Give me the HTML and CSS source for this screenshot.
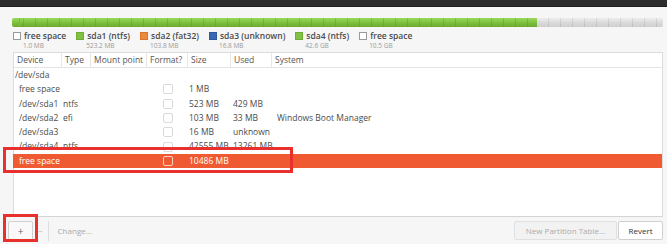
FILE: index.html
```html
<!doctype html>
<html>
  <head>
    <title>Installation type</title>
    <link rel="stylesheet" href="styles.css">
  </head>
  <body>
    <div class="topbar"></div>
    <div class="window">
      <div class="diskbar">
        <div class="bar-used"><span class="bar-efi"></span></div>
        <div class="bar-free"></div>
      </div>

      <div class="legend">
        <div class="legend-item">
          <div class="legend-name"><span class="swatch swatch-free"></span>free space</div>
          <div class="legend-size">1.0 MB</div>
        </div>
        <div class="legend-item">
          <div class="legend-name"><span class="swatch swatch-ntfs"></span>sda1 (ntfs)</div>
          <div class="legend-size">523.2 MB</div>
        </div>
        <div class="legend-item">
          <div class="legend-name"><span class="swatch swatch-fat"></span>sda2 (fat32)</div>
          <div class="legend-size">103.8 MB</div>
        </div>
        <div class="legend-item">
          <div class="legend-name"><span class="swatch swatch-unknown"></span>sda3 (unknown)</div>
          <div class="legend-size">16.8 MB</div>
        </div>
        <div class="legend-item">
          <div class="legend-name"><span class="swatch swatch-ntfs"></span>sda4 (ntfs)</div>
          <div class="legend-size">42.6 GB</div>
        </div>
        <div class="legend-item">
          <div class="legend-name"><span class="swatch swatch-free"></span>free space</div>
          <div class="legend-size">10.5 GB</div>
        </div>
      </div>

      <div class="table">
        <div class="row head">
          <div class="cell">Device</div>
          <div class="cell">Type</div>
          <div class="cell">Mount point</div>
          <div class="cell">Format?</div>
          <div class="cell">Size</div>
          <div class="cell">Used</div>
          <div class="cell">System</div>
        </div>
        <div class="row">
          <div class="cell c-dev">/dev/sda</div>
          <div class="cell"></div><div class="cell"></div><div class="cell"></div>
          <div class="cell"></div><div class="cell"></div><div class="cell"></div>
        </div>
        <div class="row">
          <div class="cell c-dev child">free space</div>
          <div class="cell c-type"></div>
          <div class="cell"></div>
          <div class="cell c-fmt"><span class="check"></span></div>
          <div class="cell c-size">1 MB</div>
          <div class="cell c-used"></div>
          <div class="cell c-sys"></div>
        </div>
        <div class="row">
          <div class="cell c-dev child">/dev/sda1</div>
          <div class="cell c-type">ntfs</div>
          <div class="cell"></div>
          <div class="cell c-fmt"><span class="check"></span></div>
          <div class="cell c-size">523 MB</div>
          <div class="cell c-used">429 MB</div>
          <div class="cell c-sys"></div>
        </div>
        <div class="row">
          <div class="cell c-dev child">/dev/sda2</div>
          <div class="cell c-type">efi</div>
          <div class="cell"></div>
          <div class="cell c-fmt"><span class="check"></span></div>
          <div class="cell c-size">103 MB</div>
          <div class="cell c-used">33 MB</div>
          <div class="cell c-sys">Windows Boot Manager</div>
        </div>
        <div class="row">
          <div class="cell c-dev child">/dev/sda3</div>
          <div class="cell c-type"></div>
          <div class="cell"></div>
          <div class="cell c-fmt"><span class="check"></span></div>
          <div class="cell c-size">16 MB</div>
          <div class="cell c-used">unknown</div>
          <div class="cell c-sys"></div>
        </div>
        <div class="row">
          <div class="cell c-dev child">/dev/sda4</div>
          <div class="cell c-type">ntfs</div>
          <div class="cell"></div>
          <div class="cell c-fmt"><span class="check"></span></div>
          <div class="cell c-size">42555 MB</div>
          <div class="cell c-used">13261 MB</div>
          <div class="cell c-sys"></div>
        </div>
        <div class="row selected">
          <div class="cell c-dev child">free space</div>
          <div class="cell c-type"></div>
          <div class="cell"></div>
          <div class="cell c-fmt"><span class="check"></span></div>
          <div class="cell c-size">10486 MB</div>
          <div class="cell c-used"></div>
          <div class="cell c-sys"></div>
        </div>
      </div>

      <div class="toolbar">
        <button class="btn btn-add">+</button>
        <span class="minus">&minus;</span>
        <span class="sep"></span>
        <span class="change">Change...</span>
        <span class="spacer"></span>
        <button class="btn btn-disabled">New Partition Table...</button>
        <button class="btn btn-revert">Revert</button>
      </div>
    </div>

    <!-- annotation boxes drawn over the screenshot -->
    <div class="mark mark-row"></div>
    <div class="mark mark-add"></div>
  </body>
</html>
```

FILE: styles.css
```css
body {
  margin: 0;
  background: #f6f6f6;
  font-family: "Open Sans", "Noto Sans", sans-serif;
  color: #4a4a4a;
  width: 667px;
  height: 244px;
  overflow: hidden;
}
.topbar {
  height: 6px;
  background: #2c2c2c;
  border-bottom: 1px solid #1e1e1e;
}
.window {
  padding: 0 4px 0 13px;
}
.diskbar {
  display: flex;
  height: 9px;
  margin: 11px 0 0 -1px;
  border-radius: 2px;
  overflow: hidden;
}
.bar-used {
  position: relative;
  width: 525px;
  background:
    repeating-linear-gradient(to right, transparent 0 11px, rgba(40, 90, 10, 0.18) 11px 12px),
    linear-gradient(#9ad85d, #7cbf3c 55%, #6aab2e);
}
.bar-efi {
  position: absolute;
  left: 7px;
  top: 0;
  width: 1px;
  height: 9px;
  background: #e8862a;
}
.bar-free {
  flex: 1;
  background:
    repeating-linear-gradient(to right, transparent 0 11px, rgba(0, 0, 0, 0.08) 11px 12px),
    linear-gradient(#eeeeee, #d9d9d9 55%, #cfcfcf);
}
.legend {
  display: flex;
  gap: 10px;
  margin-top: 4px;
  height: 21px;
}
.legend-name {
  font-size: 8.5px;
  font-weight: 600;
  line-height: 10px;
  color: #4c4c4c;
  display: flex;
  align-items: center;
  white-space: nowrap;
}
.legend-size {
  font-size: 6.5px;
  line-height: 9px;
  color: #9a9a9a;
  padding-left: 10px;
}
.swatch {
  width: 6px;
  height: 6px;
  margin-right: 3px;
  border: 1px solid transparent;
}
.swatch-free {
  background: #fff;
  border-color: #9a9a9a;
}
.swatch-ntfs {
  background: #80c243;
  border-color: #6fae36;
}
.swatch-fat {
  background: #ee8a3e;
  border-color: #d9762d;
}
.swatch-unknown {
  background: #3b6ab4;
  border-color: #2f5a9c;
}
.table {
  margin-top: 0;
  height: 163px;
  background: #fff;
  border: 1px solid #dcdcdc;
  border-bottom-color: #d4d4d4;
}
.row {
  display: grid;
  grid-template-columns: 48px 29px 56px 41px 43px 41px 1fr;
  height: 14.3px;
  font-size: 8.5px;
  line-height: 14.3px;
  white-space: nowrap;
}
.row.head {
  height: 14px;
  line-height: 14px;
  border-bottom: 1px solid #e4e4e4;
  color: #555;
}
.head .cell {
  padding-left: 3px;
  border-right: 1px solid #e6e6e6;
}
.head .cell:last-child {
  border-right: none;
}
.cell {
  overflow: visible;
}
.c-dev {
  padding-left: 1px;
}
.c-dev.child {
  padding-left: 5px;
}
.c-type {
  padding-left: 1px;
}
.c-fmt {
  display: flex;
  justify-content: center;
  align-items: center;
}
.c-size {
  padding-left: 1px;
}
.c-used {
  padding-left: 2px;
}
.c-sys {
  padding-left: 5px;
}
.check {
  width: 8px;
  height: 8px;
  border: 1px solid #dadada;
  border-radius: 2px;
  background: #fff;
  margin-left: 1px;
}
.row.selected {
  background: #ef5a33;
  color: #fff;
  margin-left: -1px;
  padding-left: 1px;
}
.selected .check {
  background: transparent;
  border-color: #fbd0c2;
}
.toolbar {
  display: flex;
  align-items: center;
  height: 27px;
  margin-left: -13px;
  padding-left: 8px;
  font-size: 8px;
}
.btn {
  font-family: inherit;
  font-size: 8px;
  height: 19px;
  padding: 0 8px;
  border: 1px solid #d0d0d0;
  border-radius: 2px;
  background: #f9f9f9;
  color: #444;
}
.btn-add {
  width: 25px;
  padding: 0;
  font-size: 10px;
  color: #666;
}
.minus {
  margin-left: 5px;
  color: #b5b5b5;
  font-size: 8px;
}
.sep {
  width: 1px;
  height: 20px;
  background: #dedede;
  margin: 0 9px 0 5px;
}
.change {
  color: #a8a8a8;
}
.spacer {
  flex: 1;
}
.btn-disabled {
  width: 103px;
  background: #f2f2f2;
  border-color: #e0e0e0;
  color: #ababab;
}
.btn-revert {
  width: 45px;
  margin-left: 1px;
  background: #fff;
  color: #333;
}
.mark {
  position: absolute;
  border: 3px solid #e8302c;
  box-sizing: border-box;
}
.mark-row {
  left: 3px;
  top: 147px;
  width: 290px;
  height: 26px;
}
.mark-add {
  left: 3px;
  top: 214px;
  width: 35px;
  height: 28px;
}
```
